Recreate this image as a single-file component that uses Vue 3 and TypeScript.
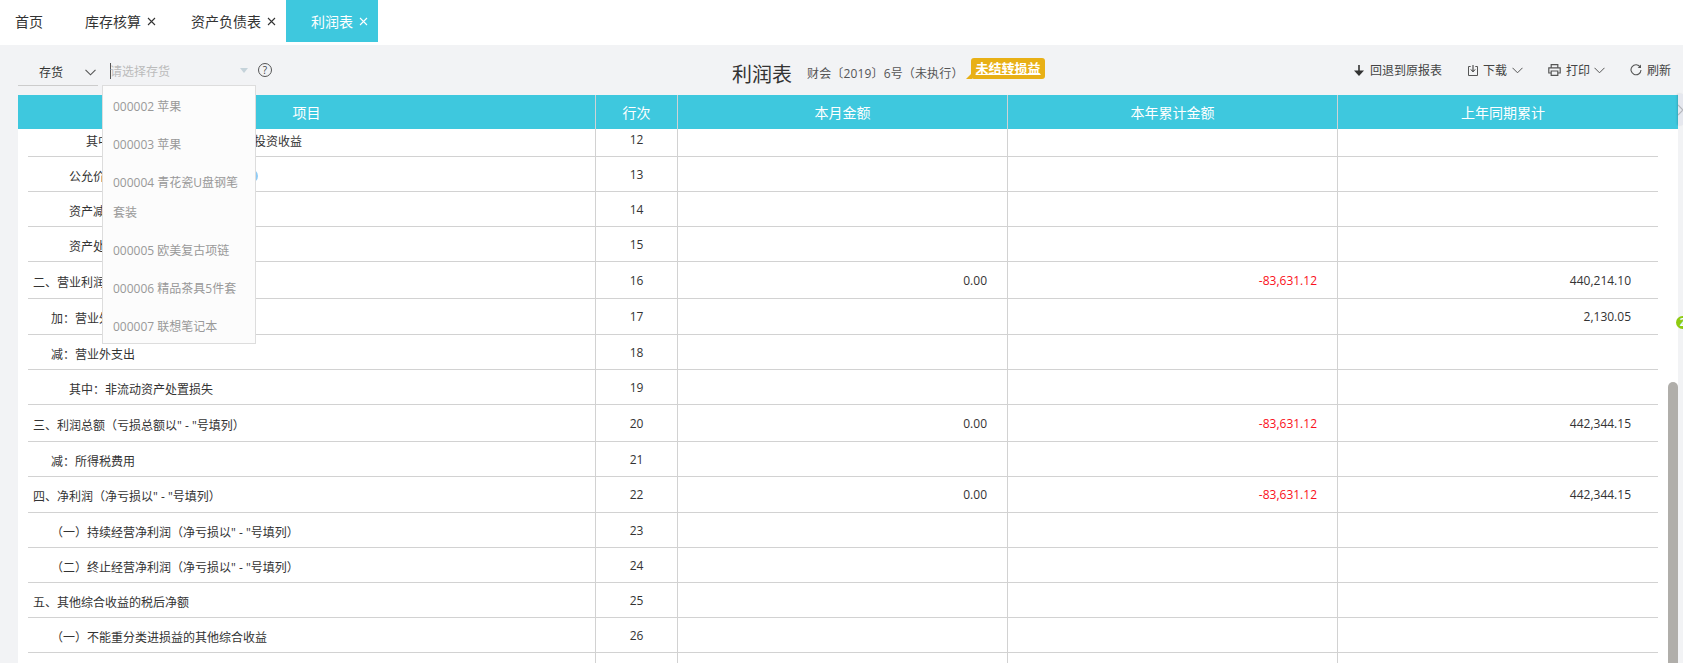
<script setup lang="ts">
interface Row {
  label: string
  no: number | null
  level: number
  height: number
  month?: string
  year?: string
  last?: string
  hint?: boolean
}

const tabs = [
  { name: '库存核算', active: false },
  { name: '资产负债表', active: false },
  { name: '利润表', active: true },
]

const options = [
  '000002 苹果',
  '000003 苹果',
  '000004 青花瓷U盘钢笔套装',
  '000005 欧美复古项链',
  '000006 精品茶具5件套',
  '000007 联想笔记本',
]

const columns = ['项目', '行次', '本月金额', '本年累计金额', '上年同期累计']

const rows: Row[] = [
  { label: '其中：对联营企业和合营企业的投资收益', no: 12, level: 3, height: 35 },
  { label: '公允价值变动收益（损失）', no: 13, level: 2, height: 35, hint: true },
  { label: '资产减值损失', no: 14, level: 2, height: 35 },
  { label: '资产处置收益', no: 15, level: 2, height: 35 },
  { label: '二、营业利润（亏损以" - "号填列）', no: 16, level: 0, height: 37, month: '0.00', year: '-83,631.12', last: '440,214.10' },
  { label: '加：营业外收入', no: 17, level: 1, height: 36, last: '2,130.05' },
  { label: '减：营业外支出', no: 18, level: 1, height: 35 },
  { label: '其中：非流动资产处置损失', no: 19, level: 2, height: 35 },
  { label: '三、利润总额（亏损总额以" - "号填列）', no: 20, level: 0, height: 37, month: '0.00', year: '-83,631.12', last: '442,344.15' },
  { label: '减：所得税费用', no: 21, level: 1, height: 35 },
  { label: '四、净利润（净亏损以" - "号填列）', no: 22, level: 0, height: 36, month: '0.00', year: '-83,631.12', last: '442,344.15' },
  { label: '（一）持续经营净利润（净亏损以" - "号填列）', no: 23, level: 1, height: 35 },
  { label: '（二）终止经营净利润（净亏损以" - "号填列）', no: 24, level: 1, height: 35 },
  { label: '五、其他综合收益的税后净额', no: 25, level: 0, height: 35 },
  { label: '（一）不能重分类进损益的其他综合收益', no: 26, level: 1, height: 35 },
  { label: '', no: null, level: 1, height: 35 },
]
</script>

<template>
  <div class="page">
    <nav class="tabs">
      <div class="tab home">首页</div>
      <div v-for="t in tabs" :key="t.name" class="tab" :class="{ active: t.active }">
        <span>{{ t.name }}</span>
        <svg class="close" width="9" height="9" viewBox="0 0 9 9">
          <path d="M1 1l7 7M8 1l-7 7" fill="none" stroke="currentColor" stroke-width="1.1" />
        </svg>
      </div>
    </nav>

    <header class="toolbar">
      <div class="left">
        <div class="type">
          <span>存货</span>
          <svg width="11" height="7" viewBox="0 0 11 7">
            <path d="M.5.8l5 5 5-5" fill="none" stroke="#555" stroke-width="1.1" />
          </svg>
        </div>
        <div class="select">
          <span class="caret"></span>
          <span class="placeholder">请选择存货</span>
          <span class="tri"></span>
          <ul class="dropdown">
            <li v-for="o in options" :key="o">{{ o }}</li>
          </ul>
        </div>
        <span class="help">?</span>
      </div>

      <div class="center">
        <h1>利润表</h1>
        <span class="rule">财会〔2019〕6号（未执行）</span>
        <span class="badge">未结转损益</span>
      </div>

      <div class="actions">
        <button class="act a1">
          <svg width="10" height="11" viewBox="0 0 10 11">
            <path d="M5 0v7" stroke="#333" stroke-width="1.6" fill="none" />
            <path d="M0 5.5h10L5 11z" fill="#333" />
          </svg>
          <span>回退到原报表</span>
        </button>
        <button class="act a2">
          <svg width="10" height="11" viewBox="0 0 10 11">
            <path d="M2.700 1.500H.5v9h9v-9H7.300" fill="none" stroke="#555" />
            <path d="M5 0v6.500M2.800 4.400L5 6.800l2.200-2.400" fill="none" stroke="#333" />
          </svg>
          <span>下载</span>
          <svg width="11" height="7" viewBox="0 0 11 7">
            <path d="M.5.8l5 5 5-5" fill="none" stroke="#555" />
          </svg>
        </button>
        <button class="act a3">
          <svg width="13" height="12" viewBox="0 0 13 12">
            <path d="M3.200 3.500V.7h6.600v2.800M3 9H.8V3.800h11.400V9H10" fill="none" stroke="#555" stroke-width="1.200" />
            <path d="M3.200 7h6.600v4.300H3.200z" fill="none" stroke="#555" stroke-width="1.200" />
          </svg>
          <span>打印</span>
          <svg width="11" height="7" viewBox="0 0 11 7">
            <path d="M.5.8l5 5 5-5" fill="none" stroke="#555" />
          </svg>
        </button>
        <button class="act a4">
          <svg width="12" height="12" viewBox="0 0 12 12">
            <path d="M10.300 3.200A5 5 0 1 0 11 6" fill="none" stroke="#555" stroke-width="1.100" />
            <path d="M11 .6v3.300H7.700z" fill="#555" />
          </svg>
          <span>刷新</span>
        </button>
      </div>
    </header>

    <section class="sheet">
      <div class="head">
        <div v-for="c in columns" :key="c" class="hcell">{{ c }}</div>
      </div>
      <div class="body">
        <div v-for="(r, i) in rows" :key="i" class="row" :style="{ height: r.height + 'px' }">
          <div class="cell name" :class="'lv' + r.level">
            <span>{{ r.label }}</span>
            <i v-if="r.hint" class="hint"></i>
          </div>
          <div class="cell no">{{ r.no }}</div>
          <div class="cell num">{{ r.month }}</div>
          <div class="cell num red">{{ r.year }}</div>
          <div class="cell num lastc">{{ r.last }}</div>
        </div>
        <div class="thumb"></div>
      </div>
    </section>

    <div class="edge">
      <svg width="5" height="12" viewBox="0 0 5 12">
        <path d="M0 1l5 5-5 5" fill="none" stroke="#b4b6bc" stroke-width="1.200" />
      </svg>
    </div>
    <div class="bubble">2</div>
  </div>
</template>

<style scoped>
.page {
  position: relative;
  height: 663px;
  overflow: hidden;
  background: #f2f3f5;
  color: #333;
  font-family: "Open Sans", "Noto Sans CJK SC", sans-serif;
  font-size: 12px;
}

.tabs {
  display: flex;
  height: 45px;
  background: #fff;
  font-size: 14px;
}
.tab {
  display: flex;
  align-items: center;
  height: 42px;
  padding: 0 10px 0 25px;
}
.tab.home {
  width: 60px;
  padding: 0 0 0 15px;
  box-sizing: border-box;
}
.tab.active {
  background: #3ec8de;
  color: #fff;
}
.close {
  margin-left: 6px;
  margin-top: 1px;
}

.toolbar {
  display: flex;
  height: 50px;
  padding-left: 18px;
}
.left {
  display: flex;
  width: 714px;
  height: 40px;
}
.type {
  display: flex;
  align-items: center;
  box-sizing: border-box;
  width: 80px;
  height: 41px;
  padding: 14px 2px 0 21px;
  justify-content: space-between;
  border-bottom: 1px solid #ccc;
}
.select {
  position: relative;
  width: 154px;
  margin-left: 4px;
  height: 40px;
}
.caret {
  position: absolute;
  left: 8px;
  top: 18px;
  width: 1px;
  height: 16px;
  background: #555;
}
.placeholder {
  position: absolute;
  left: 8px;
  top: 18px;
  line-height: 18px;
  color: #bbb;
}
.tri {
  position: absolute;
  left: 138px;
  top: 23px;
  border-left: 4px solid transparent;
  border-right: 4px solid transparent;
  border-top: 5px solid #c5d3da;
}
.dropdown {
  position: absolute;
  z-index: 3;
  left: 0;
  top: 40px;
  width: 154px;
  height: 259px;
  margin: 0;
  padding: 0 10px;
  box-sizing: border-box;
  list-style: none;
  background: #fcfcfc;
  border: 1px solid #ddd;
  color: #999;
  line-height: 30px;
}
.dropdown li {
  padding: 6px 0 2px;
}
.help {
  width: 12px;
  height: 12px;
  margin: 18px 0 0 2px;
  border: 1px solid #555;
  border-radius: 50%;
  text-align: center;
  line-height: 12px;
  font-size: 10px;
  color: #444;
}

.center {
  display: flex;
  align-items: center;
  height: 56px;
}
.center h1 {
  margin: 0;
  font-size: 20px;
  font-weight: 400;
}
.rule {
  margin-left: 15px;
  color: #555;
  letter-spacing: 0.15px;
}
.badge {
  position: relative;
  margin: 0 0 9px 7px;
  padding: 0 4px 0 5px;
  height: 21px;
  line-height: 20px;
  border-radius: 3px;
  background: #e8b016;
  color: #fff;
  font-size: 13px;
  font-weight: 700;
  text-decoration: underline;
}
.badge::before {
  content: "";
  position: absolute;
  left: -5px;
  bottom: 0;
  border-right: 6px solid #e8b016;
  border-top: 6px solid transparent;
}

.actions {
  display: flex;
  align-items: center;
  margin-left: auto;
  padding-right: 12px;
  height: 50px;
}
.act {
  display: flex;
  align-items: center;
  padding: 0;
  border: 0;
  background: none;
  color: #444;
  font: inherit;
  height: 51px;
}
.a1 span {
  margin-left: 6px;
}
.a2 {
  margin-left: 26px;
}
.a2 span {
  margin: 0 5px;
}
.a3 {
  margin-left: 25px;
}
.a3 span {
  margin: 0 4px 0 5px;
}
.a4 {
  margin-left: 25px;
}
.a4 span {
  margin-left: 5px;
}

.sheet {
  width: 1660px;
  margin-left: 18px;
  background: #fff;
}
.head {
  display: grid;
  grid-template-columns: 578px 82px 330px 330px 340px;
  height: 34px;
  background: #3ec8de;
  color: #fff;
  font-size: 14px;
}
.hcell {
  box-sizing: border-box;
  padding-top: 1px;
  line-height: 33px;
  text-align: center;
  border-right: 1px solid #cfd3d6;
}
.hcell:last-child {
  border-right: 0;
  padding-right: 10px;
}

.body {
  position: relative;
  height: 534px;
  overflow: hidden;
}
.row {
  display: grid;
  grid-template-columns: 568px 82px 330px 330px 320px;
  width: 1630px;
  margin-left: 10px;
  box-sizing: border-box;
  border-bottom: 1px solid #d2d2d2;
}
.row:first-child {
  margin-top: -7px;
}
.cell {
  display: flex;
  align-items: center;
  box-sizing: border-box;
  border-right: 1px solid #d2d2d2;
}
.name {
  padding-top: 3px;
}
.lv0 { padding-left: 5px; }
.lv1 { padding-left: 23px; }
.lv2 { padding-left: 41px; }
.lv3 { padding-left: 58px; }
.no {
  justify-content: center;
}
.num {
  justify-content: flex-end;
  padding-right: 20px;
}
.red {
  color: #fa1020;
}
.lastc {
  border-right: 0;
  padding-right: 27px;
  color: #333;
}
.hint {
  width: 14px;
  height: 14px;
  margin-left: 31px;
  border-radius: 50%;
  background: #8ecbf5;
}
.thumb {
  position: absolute;
  right: 0;
  top: 253px;
  bottom: 0;
  width: 10px;
  border-radius: 5px 5px 0 0;
  background: #b0aeaa;
}

.edge {
  position: absolute;
  left: 1678px;
  top: 94px;
  width: 5px;
  height: 31px;
  display: flex;
  align-items: center;
  background: #e6e8ef;
  box-shadow: -1px 0 2px rgba(0, 0, 0, 0.15);
}
.bubble {
  position: absolute;
  left: 1676px;
  top: 316px;
  width: 13px;
  height: 13px;
  border-radius: 50%;
  background: #8fcb10;
  color: #fff;
  font-size: 10px;
  font-weight: 700;
  line-height: 13px;
  text-align: center;
}
</style>

<style>
html,
body {
  margin: 0;
  overflow: hidden;
}
</style>
